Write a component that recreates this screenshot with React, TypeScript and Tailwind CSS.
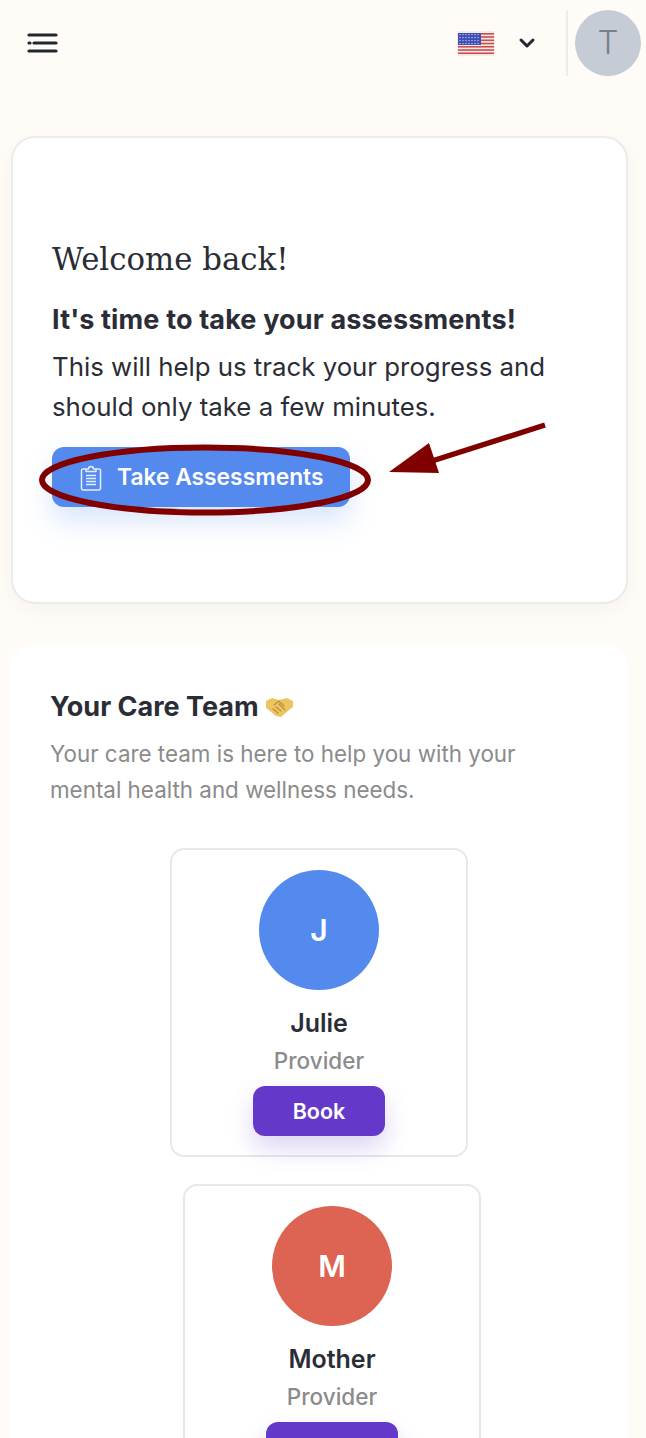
import { ChevronDown } from 'lucide-react';

const font = { fontFamily: 'Inter, "Liberation Sans", sans-serif' };

function MenuIcon() {
  return (
    <svg width="32" height="22" viewBox="0 0 32 22" fill="none" stroke="#23262f" strokeWidth="3.2" strokeLinecap="round">
      <path d="M2 3h27" />
      <path d="M2 11h1" />
      <path d="M7 11h22" />
      <path d="M2 19h27" />
    </svg>
  );
}

function Flag() {
  const stripes = [0, 2, 4, 6, 8, 10, 12];
  return (
    <svg width="38" height="25" viewBox="0 0 38 25">
      <rect width="38" height="25" rx="1.5" fill="#f6ebe6" />
      {stripes.map((i) => (
        <rect key={i} x="1" y={2 + i * 1.62} width="36" height="1.62" fill="#c9504f" />
      ))}
      <rect x="1" y="2" width="23" height="12" fill="#3f4fb5" />
      {[0, 1, 2, 3].map((r) =>
        [0, 1, 2, 3, 4, 5, 6].map((c) => (
          <circle key={`${r}-${c}`} cx={3 + c * 3} cy={3.6 + r * 3} r="0.7" fill="#d9dcf2" />
        ))
      )}
    </svg>
  );
}

function ClipboardIcon() {
  return (
    <svg width="22" height="26" viewBox="0 0 22 26" fill="none" stroke="#e4edfd" strokeWidth="1.5" strokeLinejoin="round">
      <path d="M6 4H3a1.5 1.5 0 0 0-1.5 1.5v18A1.5 1.5 0 0 0 3 25h16a1.5 1.5 0 0 0 1.5-1.5v-18A1.5 1.5 0 0 0 19 4h-3" />
      <path d="M6 6.5V4h2.5a2.5 2.5 0 0 1 5 0H16v2.5z" />
      <path d="M6 10.5h10M6 13.5h10M6 16.5h10M6 19.5h10" />
    </svg>
  );
}

function Handshake() {
  return (
    <svg width="29" height="22" viewBox="0 0 29 22" className="inline-block">
      <path d="M1 5l6-3 7 2 8-2 6 3 0 6-4 3-8 7-5-1-6-5-4-3z" fill="#ebc463" />
      <path d="M9 9l5-4 5 5M8 13l5 4M11 11l5 4M14 8l6 6" fill="none" stroke="#bd9038" strokeWidth="1.2" strokeLinecap="round" />
    </svg>
  );
}

function CareCard({ initial, name, color, shifted }: { initial: string; name: string; color: string; shifted?: boolean }) {
  return (
    <div
      className={`flex w-[298px] shrink-0 flex-col items-center rounded-[14px] border-2 border-[#e8e8e8] bg-white pt-[20px] pb-[19px] ${shifted ? 'ml-[26px]' : ''}`}
    >
      <div className={`flex h-[120px] w-[120px] items-center justify-center rounded-full text-[30px] font-semibold text-white ${color}`}>
        {initial}
      </div>
      <div className="mt-[16px] text-[25px] leading-[34px] font-semibold text-[#2a2d36]">{name}</div>
      <div className="mt-[4px] text-[22.5px] leading-[34px] font-medium text-[#8b8b8b]">Provider</div>
      <button className="mt-[8px] h-[50px] w-[132px] rounded-[12px] bg-[#6439c9] text-[21.5px] font-semibold text-white shadow-[0_12px_24px_rgba(100,57,201,0.22)]">
        Book
      </button>
    </div>
  );
}

export default function App() {
  return (
    <div className="relative h-screen overflow-hidden bg-[#fffcf8]" style={font}>
      {/* Header */}
      <header className="flex h-[86px] items-center pr-[5px] pl-[27px]">
        <MenuIcon />
        <div className="ml-auto flex items-center">
          <Flag />
          <ChevronDown size={24} strokeWidth={3} className="ml-[20px] text-[#23262f]" />
          <div className="ml-[27px] h-[66px] w-[2px] bg-[#f0ece8]" />
          <div className="ml-[7px] flex h-[66px] w-[66px] items-center justify-center rounded-full bg-[#c6ccd5] text-[33px] font-light text-[#7b7f86]">
            T
          </div>
        </div>
      </header>

      {/* Welcome card */}
      <section className="mt-[50px] mr-[18px] ml-[11px] h-[468px] rounded-[24px] border-2 border-[#ebebea] bg-white px-[39px] pt-[100px] shadow-[0_6px_24px_rgba(0,0,0,0.04)]">
        <h1 className="text-[30.8px] leading-[42px] text-[#2a2d36]" style={{ fontFamily: '"DejaVu Serif", serif' }}>
          Welcome back!
        </h1>
        <p className="mt-[20px] text-[27px] leading-[40px] font-bold tracking-[0.15px] text-[#2a2d36]">It's time to take your assessments!</p>
        <p className="mt-[7px] text-[25.8px] leading-[40px] text-[#2a2d36]">
          This will help us track your progress and should only take a few minutes.
        </p>
        <button className="mt-[20px] flex h-[60px] w-[298px] items-center gap-[15px] rounded-[12px] bg-[#5489ee] pt-[1px] pl-[28px] text-[22.8px] font-semibold text-white shadow-[0_14px_28px_rgba(84,137,238,0.22)]">
          <ClipboardIcon />
          Take Assessments
        </button>
      </section>

      {/* Care team */}
      <section className="mt-[40px] mr-[18px] ml-[10px] rounded-[24px] bg-white px-[40px] pt-[45px]">
        <h2 className="flex items-center gap-[6px] text-[27px] leading-[36px] font-bold text-[#2a2d36]">
          Your Care Team <Handshake />
        </h2>
        <p className="mt-[11px] max-w-[500px] text-[22.4px] leading-[36px] text-[#8b8b8b]">
          Your care team is here to help you with your mental health and wellness needs.
        </p>
        <div className="mt-[40px] flex flex-col items-center gap-[27px]">
          <CareCard initial="J" name="Julie" color="bg-[#5489ee]" />
          <CareCard initial="M" name="Mother" color="bg-[#dd6352]" shifted />
        </div>
      </section>

      {/* Annotation drawn over the screenshot */}
      <svg className="pointer-events-none absolute top-0 left-0" width="646" height="1438" fill="none">
        <ellipse cx="205" cy="480" rx="163" ry="32.5" stroke="#800000" strokeWidth="6" />
        <path d="M545 425L432 461" stroke="#800000" strokeWidth="5.5" />
        <path d="M389 472L429 443L439 473Z" fill="#800000" />
      </svg>
    </div>
  );
}
